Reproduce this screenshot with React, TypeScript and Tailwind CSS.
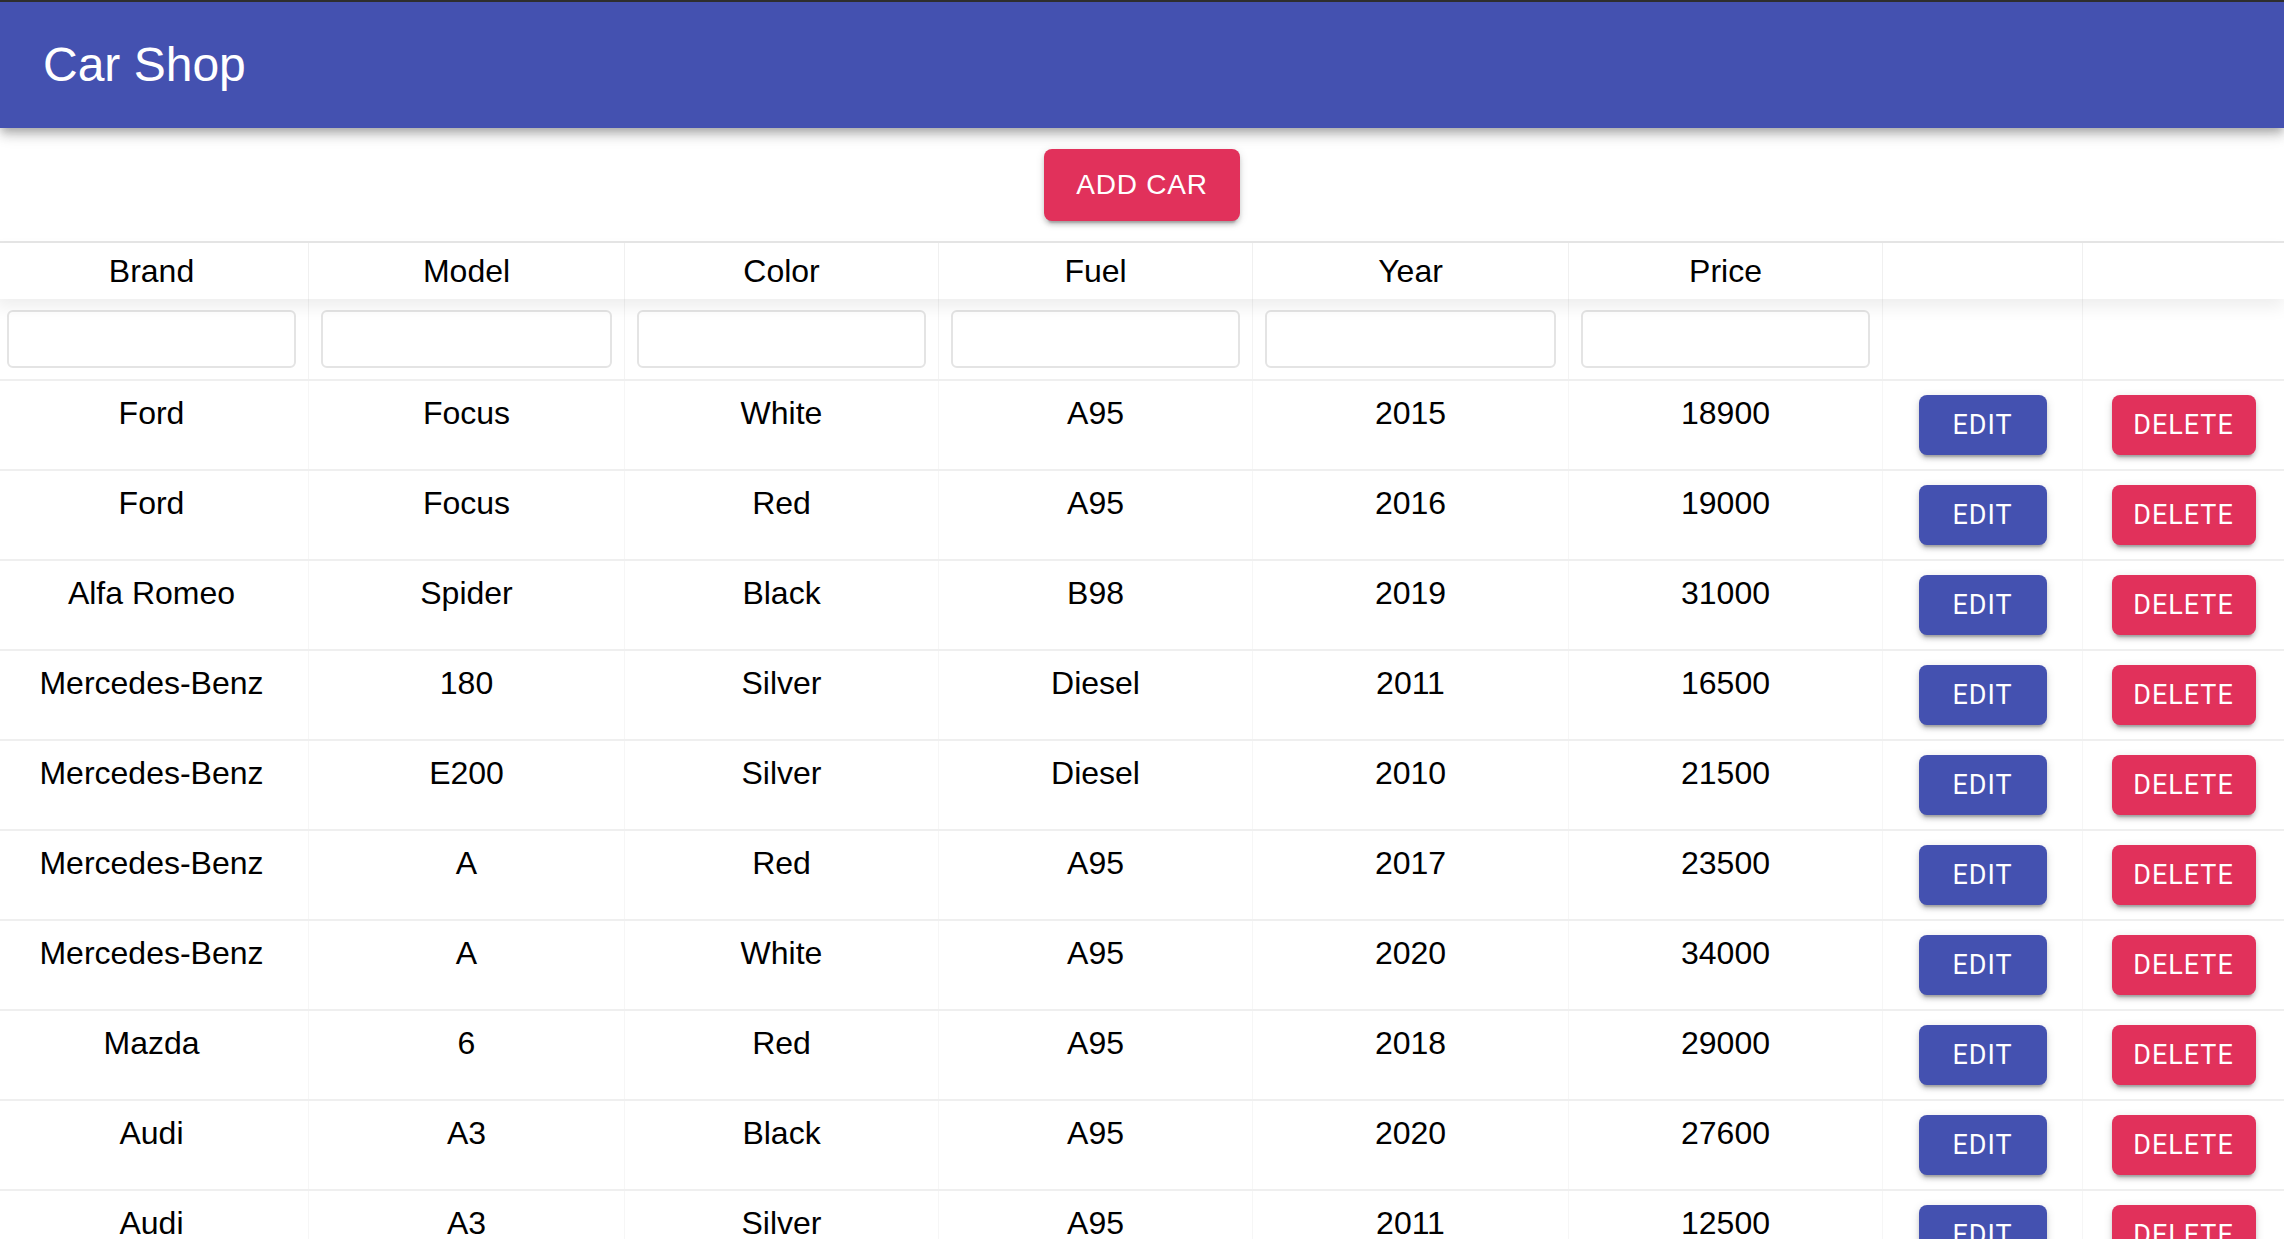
import React from "react";

const rows: [string, string, string, string, string, string][] = [
  ["Ford", "Focus", "White", "A95", "2015", "18900"],
  ["Ford", "Focus", "Red", "A95", "2016", "19000"],
  ["Alfa Romeo", "Spider", "Black", "B98", "2019", "31000"],
  ["Mercedes-Benz", "180", "Silver", "Diesel", "2011", "16500"],
  ["Mercedes-Benz", "E200", "Silver", "Diesel", "2010", "21500"],
  ["Mercedes-Benz", "A", "Red", "A95", "2017", "23500"],
  ["Mercedes-Benz", "A", "White", "A95", "2020", "34000"],
  ["Mazda", "6", "Red", "A95", "2018", "29000"],
  ["Audi", "A3", "Black", "A95", "2020", "27600"],
  ["Audi", "A3", "Silver", "A95", "2011", "12500"],
];

const headers = ["Brand", "Model", "Color", "Fuel", "Year", "Price"];

const gridCols =
  "grid grid-cols-[314px_316px_314px_314px_316px_314px_200px_201px]";

const btnShadow =
  "shadow-[0_6px_2px_-4px_rgba(0,0,0,0.2),0_4px_4px_0_rgba(0,0,0,0.14),0_2px_10px_0_rgba(0,0,0,0.12)]";

export default function App() {
  return (
    <div className="min-h-[1239px] w-[2284px] overflow-hidden bg-white font-['Liberation_Sans',Arial,sans-serif] text-black">
      <header className="relative z-20 flex h-[128px] items-center border-t-2 border-[#2e2e2e] bg-[#4451b0] pl-[43px] shadow-[0_4px_8px_-2px_rgba(0,0,0,0.2),0_8px_10px_0_rgba(0,0,0,0.14),0_2px_20px_0_rgba(0,0,0,0.12)]">
        <h1 className="text-[48px] font-normal leading-none text-white">Car Shop</h1>
      </header>

      <div className="flex justify-center pt-[21px] pb-[20px]">
        <button
          className={`flex h-[72px] w-[196px] items-center justify-center rounded-[8px] bg-[#e1315b] text-[28px] tracking-[0.8px] text-white ${btnShadow}`}
        >
          ADD CAR
        </button>
      </div>

      <div className="ml-[-5px] w-[2289px] border-t-2 border-[#e6e6e6]">
        <div className={`${gridCols} relative z-10 h-[56px] bg-white shadow-[0_8px_16px_0_rgba(0,0,0,0.07)]`}>
          {headers.map((h) => (
            <div
              key={h}
              className="flex items-center justify-center border-r border-[#f0f0f0] text-[32px] leading-none"
            >
              {h}
            </div>
          ))}
          <div className="border-r border-[#f0f0f0]" />
          <div />
        </div>

        <div className={`${gridCols} h-[82px] border-b-2 border-[#efefef]`}>
          {headers.map((h) => (
            <div key={h} className="border-r border-[#f3f3f3] px-[12px] pt-[11px]">
              <input
                aria-label={h}
                className="h-[58px] w-full rounded-[6px] border-2 border-[#e4e4e4] bg-white outline-none"
              />
            </div>
          ))}
          <div className="border-r border-[#f3f3f3]" />
          <div />
        </div>

        {rows.map((r, i) => (
          <div key={i} className={`${gridCols} h-[90px] border-b-2 border-[#efefef]`}>
            {r.map((c, j) => (
              <div
                key={j}
                className="border-r border-[#f6f6f6] pt-[14px] text-center text-[32px] leading-[36px]"
              >
                {c}
              </div>
            ))}
            <div className="flex items-center justify-center border-r border-[#f6f6f6]">
              <button
                className={`flex h-[60px] w-[128px] items-center justify-center rounded-[8px] bg-[#4451b0] font-['Roboto',sans-serif] text-[27px] font-normal tracking-[1px] text-white ${btnShadow}`}
              >
                EDIT
              </button>
            </div>
            <div className="flex items-center justify-center">
              <button
                className={`flex h-[60px] w-[144px] items-center justify-center rounded-[8px] bg-[#e1315b] font-['Roboto',sans-serif] text-[27px] font-normal tracking-[1px] text-white ${btnShadow}`}
              >
                DELETE
              </button>
            </div>
          </div>
        ))}
      </div>
    </div>
  );
}
